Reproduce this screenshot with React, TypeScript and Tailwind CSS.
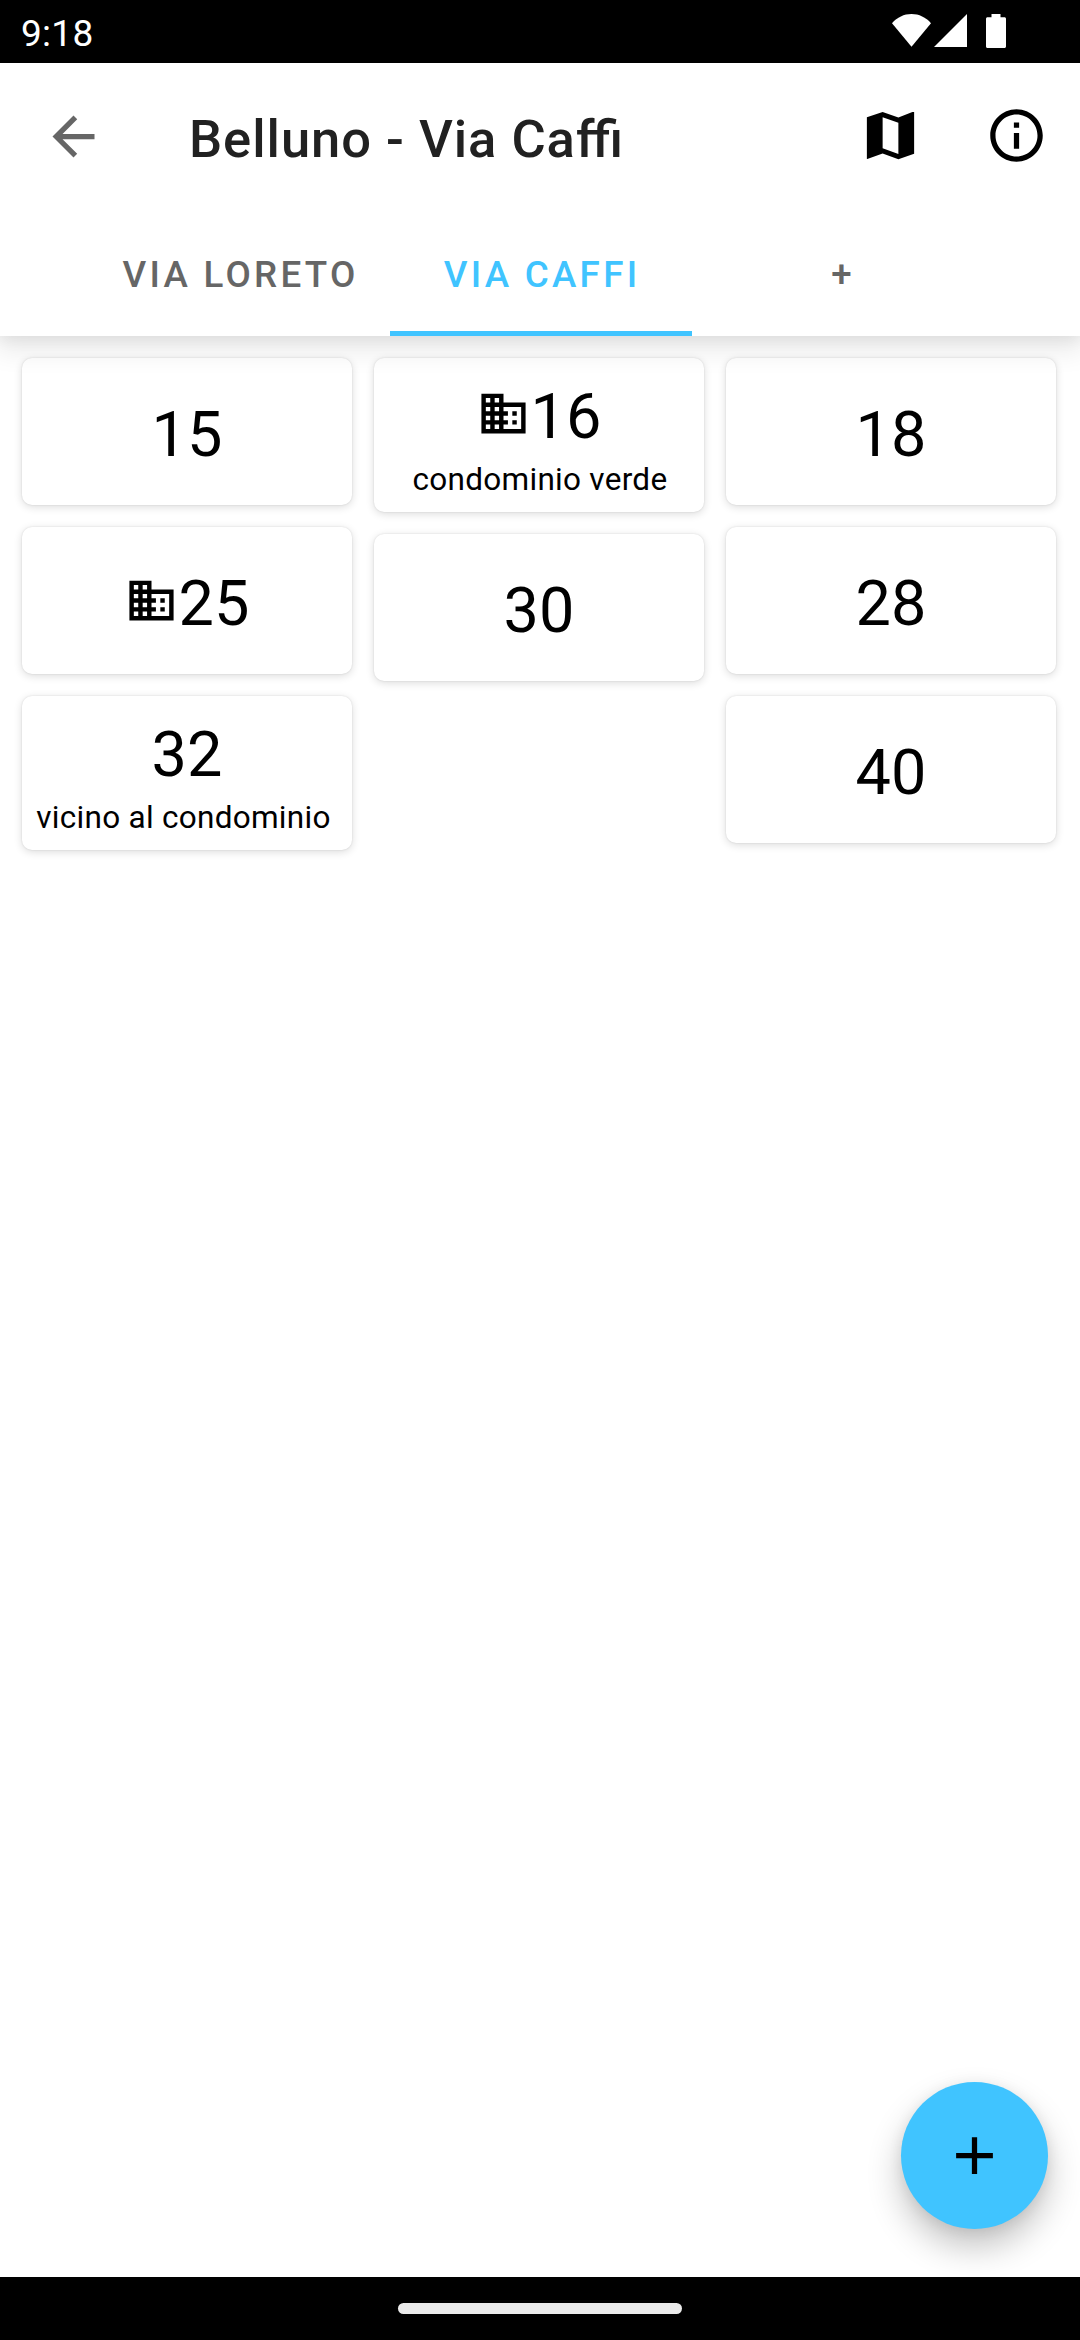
import type { ReactNode } from 'react';

interface House {
  number: string;
  building?: boolean;
  note?: string;
  noteClassName?: string;
}

const tabs = [
  { label: 'Via Loreto', className: 'w-[301px] text-[#666666]' },
  { label: 'Via Caffi', className: 'w-[302px] text-[#40c4ff]', active: true },
  { label: '+', className: 'w-[300px] text-[#666666]' },
];

// One array per column, the cards stack independently in each
const columns: House[][] = [
  [
    { number: '15' },
    { number: '25', building: true },
    { number: '32', note: 'vicino al condominio', noteClassName: 'pr-[7px]' },
  ],
  [
    { number: '16', building: true, note: 'condominio verde', noteClassName: 'pl-[2px]' },
    { number: '30' },
  ],
  [{ number: '18' }, { number: '28' }, { number: '40' }],
];

function Icon({ className, children }: { className: string; children: ReactNode }) {
  return (
    <svg className={className} viewBox="0 0 24 24" fill="currentColor">
      {children}
    </svg>
  );
}

function StatusBar() {
  return (
    <div className="flex h-[63px] items-start bg-black pl-[21px] text-white">
      <span className="mt-3 text-[37px] leading-[43px] tracking-[0.3px]">9:18</span>
      <svg className="mt-[14px] ml-auto h-[33px] w-[39px]" viewBox="0 0 39 33" fill="currentColor">
        <path d="M19.5 32.7L0 9.2C5.2 3.3 12 0 19.5 0S33.8 3.3 39 9.2z" />
      </svg>
      <svg className="mt-[14px] ml-[3px] h-[33px] w-[33px]" viewBox="0 0 33 33" fill="currentColor">
        <path d="M0 33L33 0v33z" />
      </svg>
      <svg className="mt-[14px] mr-[74px] ml-[19px] h-[34px] w-[20px]" viewBox="0 0 20 34" fill="currentColor">
        <path d="M14.5 3.3V0h-9v3.3h-4C.7 3.3 0 4 0 4.8v27.7c0 .8.7 1.5 1.5 1.5h17c.8 0 1.5-.7 1.5-1.5V4.8c0-.8-.7-1.5-1.5-1.5z" />
      </svg>
    </div>
  );
}

function Header() {
  return (
    <header className="relative z-10 h-[273px] bg-white shadow-[0_10px_26px_4px_rgba(0,0,0,0.09),0_2px_14px_2px_rgba(0,0,0,0.06)]">
      <div className="flex h-[147px] items-center pr-8 pl-[42px]">
        <Icon className="size-[63px] text-[#666666]">
          <path d="M20 11H7.83l5.59-5.59L12 4l-8 8 8 8 1.41-1.41L7.83 13H20v-2z" />
        </Icon>
        <h1 className="ml-[84px] pt-1 text-[52.5px] leading-[62px] font-medium tracking-[0.97px] text-[#212121] [font-feature-settings:'liga']">
          Belluno - Via Caffi
        </h1>
        <Icon className="mb-[2px] ml-auto size-[63px] text-black">
          <path d="M20.5 3l-.16.03L15 5.1 9 3 3 5.02V21l.16-.03L9 18.9l6 2.1 6-2.02V3zM15 19l-6-2.11V5l6 2.11V19z" />
        </Icon>
        <Icon className="mb-[2px] ml-[63px] size-[63px] text-black">
          <path d="M11 7h2v2h-2zm0 4h2v6h-2zm1-9C6.48 2 2 6.48 2 12s4.48 10 10 10 10-4.48 10-10S17.52 2 12 2zm0 18c-4.41 0-8-3.59-8-8s3.59-8 8-8 8 3.59 8 8-3.59 8-8 8z" />
        </Icon>
      </div>
      <nav className="flex h-[126px] justify-center">
        {tabs.map((tab) => (
          <button
            key={tab.label}
            className={`flex flex-col items-center pt-[43px] text-[36.75px] leading-[43px] font-medium tracking-[3.28px] uppercase ${tab.className}`}
          >
            <span className="pl-[3px]">{tab.label}</span>
            {tab.active && <span className="mt-auto h-[5px] w-full bg-[#40c4ff]" />}
          </button>
        ))}
      </nav>
    </header>
  );
}

function HouseCard({ house }: { house: House }) {
  return (
    <div
      className={`flex flex-col items-center rounded-[10px] bg-white text-black shadow-[0_2px_9px_rgba(0,0,0,0.14),0_0_2px_rgba(0,0,0,0.12)] ${house.note ? 'h-[154px] pt-[22px]' : 'h-[147px] pt-10'}`}
    >
      <div className="flex items-center">
        {house.building && (
          <Icon className="mr-[1px] mb-2 size-[53px]">
            <path d="M12 7V3H2v18h20V7H12zM6 19H4v-2h2v2zm0-4H4v-2h2v2zm0-4H4V9h2v2zm0-4H4V5h2v2zm4 12H8v-2h2v2zm0-4H8v-2h2v2zm0-4H8V9h2v2zm0-4H8V5h2v2zm10 12h-8v-2h2v-2h-2v-2h2v-2h-2V9h8v10zm-2-8h-2v2h2v-2zm0 4h-2v2h2v-2z" />
          </Icon>
        )}
        <span className="text-[63px] leading-[74px]">{house.number}</span>
      </div>
      {house.note && (
        <span className={`mt-[5px] text-[31.5px] leading-[42px] tracking-[0.28px] ${house.noteClassName ?? ''}`}>
          {house.note}
        </span>
      )}
    </div>
  );
}

export default function App() {
  return (
    <div className="flex h-[2340px] w-[1080px] flex-col overflow-hidden bg-white font-['Roboto',sans-serif]">
      <StatusBar />
      <Header />
      <main className="relative flex-1">
        <div className="grid grid-cols-[330px_330px_330px] gap-[22px] p-[22px]">
          {columns.map((houses, i) => (
            <div key={i} className="flex flex-col gap-[22px]">
              {houses.map((house) => (
                <HouseCard key={house.number} house={house} />
              ))}
            </div>
          ))}
        </div>
        <button className="absolute right-8 bottom-12 flex size-[147px] items-center justify-center rounded-full bg-[#40c4ff] text-black shadow-[0_18px_34px_rgba(0,0,0,0.24),0_2px_14px_rgba(0,0,0,0.08)]">
          <Icon className="size-[63px]">
            <path d="M19 13h-6v6h-2v-6H5v-2h6V5h2v6h6v2z" />
          </Icon>
        </button>
      </main>
      <div className="z-10 flex h-[63px] justify-center bg-black pt-[26px]">
        <div className="h-[11px] w-[284px] rounded-full bg-[#ebebeb]" />
      </div>
    </div>
  );
}
